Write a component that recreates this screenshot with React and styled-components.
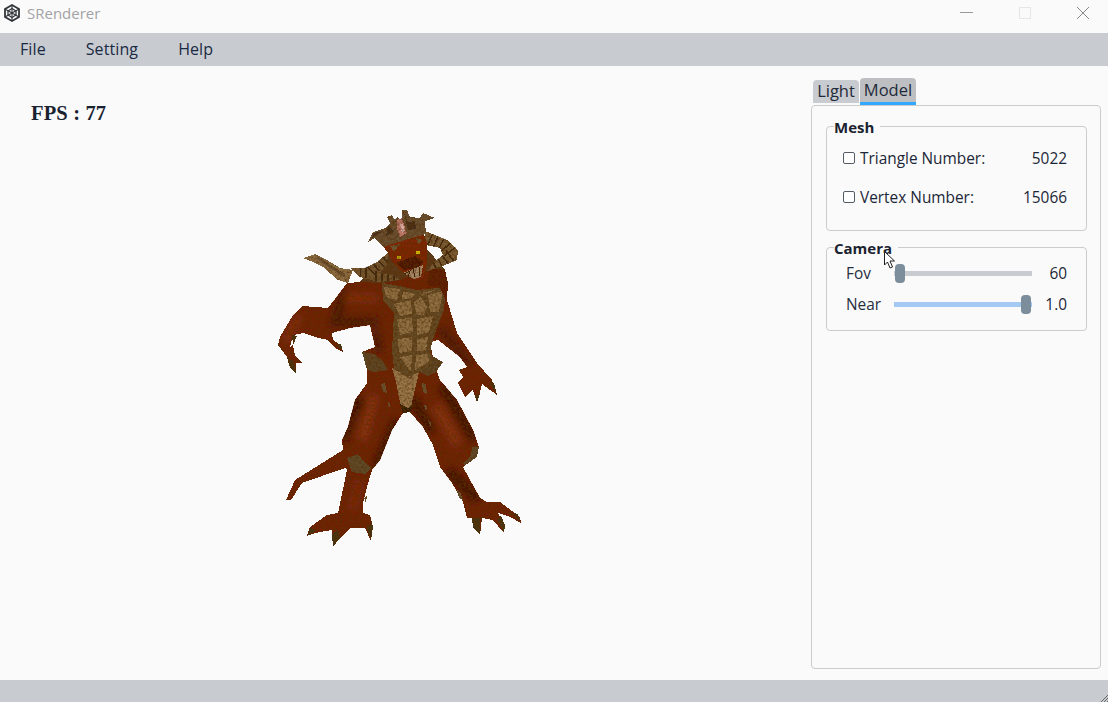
import React from "react";
import styled, { createGlobalStyle } from "styled-components";

const Global = createGlobalStyle`
  html, body { margin: 0; padding: 0; background: #fafafa; }
  body { font-family: "Open Sans", "Noto Sans", "Liberation Sans", sans-serif; color: #1c2738; }
  * { box-sizing: border-box; }
`;

const Page = styled.div`
  width: 1108px; height: 702px; display: flex; flex-direction: column; overflow: hidden; position: relative; background: #fafafa;
`;
const TitleBar = styled.header`
  height: 33px; display: flex; align-items: center; padding: 0 0 7px 3px; flex: none;
`;
const AppName = styled.span`
  margin-left: 6px; font-size: 15px; color: #a3a3a6; flex: 1;
`;
const WinButtons = styled.div`
  display: flex; align-items: center; height: 100%; padding-right: 18px; gap: 44px;
`;
const MenuBar = styled.nav`
  height: 33px; flex: none; background: #c8ccd0; display: flex; align-items: center; padding: 0 0 1px 20px; gap: 40px;
`;
const MenuItem = styled.span`
  font-size: 16px; color: #1a2a44; letter-spacing: 0.1px;
`;
const Main = styled.main`
  flex: 1; min-height: 0; display: flex; padding: 12px 7px 11px 0;
`;
const Viewport = styled.section`
  flex: 1; min-width: 0; padding: 23px 0 0 31px;
`;
const Fps = styled.div`
  font-family: "Liberation Serif", serif; font-weight: 700; font-size: 20.5px; line-height: 24px; color: #1a2230; letter-spacing: 0.15px;
`;
const ModelSvg = styled.svg`
  display: block; margin: 75px 0 0 239px;
`;
const Side = styled.aside`
  width: 290px; flex: none; display: flex; flex-direction: column;
`;
const Tabs = styled.div`
  display: flex; align-items: flex-end; gap: 1px; padding-left: 2px; height: 27px; flex: none;
`;
const Tab = styled.div`
  height: ${p => (p.$active ? "27px" : "23px")};
  width: ${p => (p.$active ? "56px" : "46px")};
  padding-top: ${p => (p.$active ? "1px" : "0")};
  margin-bottom: ${p => (p.$active ? "0" : "2px")};
  text-align: center; font-size: 16.5px; line-height: 21px; color: #1f2a3a;
  background: ${p => (p.$active ? "#bdbfc2" : "#c8ccd0")};
  border-radius: 4px 4px 0 0;
  border-bottom: ${p => (p.$active ? "3px solid #33a8ff" : "none")};
`;
const Panel = styled.div`
  flex: 1; border: 1px solid #ccc; border-radius: 4px; padding: 10px 13px 0 14px; display: flex; flex-direction: column; gap: 6px;
`;
const Group = styled.fieldset`
  margin: 0; padding: 0 19px 0 16px; border: 1px solid #ccc; border-radius: 4px; height: ${p => p.$h}px; min-width: 0; flex: none;
  legend { padding: 0 6px 0 0; margin-left: -9px; font-size: 15px; font-weight: 700; color: #1a2230; line-height: 20px; position: relative; top: 1px; }
`;
const InfoRow = styled.div`
  display: flex; align-items: center; height: 20px; margin-top: ${p => p.$mt}px; font-size: 15.4px;
`;
const Check = styled.span`
  width: 12px; height: 12px; border: 1px solid #555c66; border-radius: 2px; margin-right: 5px; flex: none; background: #fff;
`;
const Value = styled.span`
  margin-left: auto;
`;
const SliderRow = styled.div`
  display: flex; align-items: center; height: 20px; margin: ${p => p.$mt}px 0 0 3px; font-size: 15.4px;
`;
const SliderLabel = styled.span`
  width: 48px; flex: none; color: #26303f;
`;
const Track = styled.div`
  width: 138px; height: 5px; flex: none; background: ${p => p.$fill}; position: relative;
`;
const Thumb = styled.span`
  position: absolute; top: -7px; width: 10px; height: 19px; border-radius: 4px; background: #7c8d9c; left: ${p => p.$left}px;
`;
const SliderValue = styled.span`
  margin-left: auto;
`;
const StatusBar = styled.footer`
  height: 22px; flex: none; background: #c8ccd0; position: relative;
`;
const Grip = styled.svg`
  position: absolute; right: 0; bottom: 0;
`;
const Cursor = styled.svg`
  position: absolute; left: 883px; top: 250px;
`;

const Logo = () => (
  <svg width="18" height="18" viewBox="0 0 18 18" fill="none" stroke="#33363b" strokeWidth="1.6">
    <path d="M9 1 L16 5 V13 L9 17 L2 13 V5 Z" strokeWidth="1.8" />
    <path d="M9 1 V17 M2 5 L16 13 M16 5 L2 13" strokeWidth="1.1" />
    <path d="M9 4.5 L13 7 V11 L9 13.5 L5 11 V7 Z" strokeWidth="1.3" />
  </svg>
);

const Minimize = () => <svg width="14" height="14"><path d="M0 6.5H13" stroke="#999" /></svg>;
const Maximize = () => <svg width="14" height="14"><rect x="1.5" y="1.5" width="11" height="11" fill="none" stroke="#e6e6e6" /></svg>;
const Close = () => <svg width="14" height="14"><path d="M1 1L13 13M13 1L1 13" stroke="#888" /></svg>;

const BODY = `M382 283 L360 282 L347 283 L338 295 L328 308 L303 306 L293 315 L280 337 L278 345 L287 357 L290 368 L296 373 L296 363 L302 363 L295 355 L293 345 L290 347 L293 335 L303 333 L315 337 L328 340 L335 348 L343 352 L338 343 L333 340 L332 333 L350 328 L370 325 L375 347 L362 352 L367 370 L367 383 L355 400 L348 427 L342 440 L343 450 L295 480 L286 500 L291 500 L302 483 L345 468 L347 470 L338 513 L327 515 L310 527 L307 536 L315 533 L332 530 L333 547 L340 538 L350 528 L365 528 L371 541 L373 527 L370 515 L363 513 L363 503 L367 487 L372 470 L380 460 L392 430 L403 413 L410 412 L423 427 L433 445 L440 467 L452 483 L463 502 L467 518 L472 518 L473 527 L480 535 L482 518 L493 520 L504 533 L505 525 L498 513 L510 517 L521 523 L520 517 L500 502 L487 502 L480 498 L463 467 L477 457 L479 447 L473 430 L457 400 L440 380 L434 362 L430 342 L438 340 L460 357 L467 367 L459 370 L463 377 L458 383 L463 393 L465 397 L473 390 L477 403 L480 392 L482 384 L497 395 L492 380 L477 363 L457 333 L447 300 L448 283 L445 270 L420 272 L400 280 Z`;
const RHORN = "M425 231 L447 240 L458 250 L457 260 L445 265 L428 271 L433 263 L443 255 L440 248 L425 245 Z";
const LHORN = "M388 253 L377 262 L365 268 L350 268 L360 277 L378 282 L400 280 L393 275 L380 273 L387 265 Z";
const CROWN = "M368 242 L373 232 L385 228 L390 223 L387 217 L392 215 L395 220 L397 217 L402 220 L402 210 L407 210 L410 217 L420 218 L423 213 L435 218 L425 221 L426 234 L412 238 L383 247 L375 238 Z";

const Monster = () => (
  <ModelSvg width="260" height="355" viewBox="270 200 260 355" shapeRendering="crispEdges">
    <defs>
      <filter id="tex" x="0" y="0" width="100%" height="100%">
        <feTurbulence type="fractalNoise" baseFrequency="0.42" numOctaves="2" seed="7" />
        <feColorMatrix values="0 0 0 0 0.1  0 0 0 0 0.03  0 0 0 0 0  1.8 0 0 0 -0.65" />
        <feComposite in2="SourceAlpha" operator="in" result="n" />
        <feMerge><feMergeNode in="SourceGraphic" /><feMergeNode in="n" /></feMerge>
      </filter>
      <filter id="soft" x="-30%" y="-30%" width="160%" height="160%"><feGaussianBlur stdDeviation="3.5" /></filter>
      <clipPath id="bodyClip"><path d={BODY} /></clipPath>
      <clipPath id="rHornClip"><path d={RHORN} /></clipPath>
      <clipPath id="lHornClip"><path d={LHORN} /></clipPath>
    </defs>
    <g filter="url(#tex)">
      {/* back tail */}
      <path d="M303 258 L315 254 L327 260 L340 268 L353 270 L348 283 L338 280 L323 267 L313 262 Z" fill="#8d6d43" />
      <path d="M318 258 L345 276" fill="none" stroke="#6d5230" strokeWidth="3" />
      {/* neck mass behind the head */}
      <path d="M360 282 L372 268 L388 253 L428 250 L445 270 L448 285 L420 292 L385 288 Z" fill="#5c3a1c" />
      {/* whole body */}
      <path d={BODY} fill="#71220f" />
      <g clipPath="url(#bodyClip)" shapeRendering="auto">
        <g filter="url(#soft)">
          <path d="M344 440 L358 395 M397 420 L376 468 M432 432 L412 398 M474 440 L442 385 M448 470 L478 500" fill="none" stroke="#3c0f05" strokeWidth="9" />
          <path d="M374 395 L362 440 M436 405 L458 445" fill="none" stroke="#8a3214" strokeWidth="11" />
          <path d="M345 290 L335 322 L378 322" fill="none" stroke="#4a1407" strokeWidth="9" />
          <path d="M300 315 L285 342 M345 298 L378 298" fill="none" stroke="#8a3316" strokeWidth="7" />
          <path d="M376 330 L379 352 M440 328 L470 365" fill="none" stroke="#46130a" strokeWidth="7" />
          <path d="M352 510 L360 480" fill="none" stroke="#7f2c12" strokeWidth="8" />
          <path d="M366 400 L350 425" fill="none" stroke="#4f160a" strokeWidth="5" />
        </g>
      </g>
      {/* knees, bumps, claws */}
      <path d="M347 458 L358 454 L364 462 L372 468 L365 474 L352 472 Z M479 447 L477 457 L465 465 L463 464 L471 455 L472 447 Z" fill="#5e4b2a" />
      <path d="M381 384 L385 383 L387 393 L383 392 Z M388 402 L390 403 L390 407 L388 406 Z M422 383 L426 384 L427 394 L423 392 Z M424 405 L427 406 L426 412 Z M428 420 L431 423 L431 427 Z M364 498 L367 495 L366 503 Z M457 490 L461 494 L463 500 L459 498 Z" fill="#6b5430" />
      <path d="M307 536 L311 527 L316 531 Z M333 547 L332 534 L338 530 L340 538 Z M371 541 L367 528 L372 522 L373 527 Z M480 535 L473 527 L472 518 L480 518 Z M504 533 L497 519 L501 516 L505 525 Z M521 523 L513 513 L518 514 Z M290 368 L288 358 L294 362 L296 373 Z M293 345 L292 335 L297 336 Z M343 352 L337 345 L341 344 Z M477 403 L475 396 L480 394 Z M497 395 L490 382 L494 383 Z" fill="#463519" />
      {/* hip plates */}
      <path d="M362 352 L374 354 L383 361 L388 370 L374 372 L367 370 Z M420 372 L432 356 L443 362 L436 372 L428 376 Z" fill="#5d4726" />
      {/* loin cloth */}
      <path d="M392 368 L420 368 L416 385 L413 398 L410 412 L403 413 L399 398 L396 382 Z" fill="#9a7748" />
      <path d="M400 372 L410 378 L416 370" fill="none" stroke="#6d5029" strokeWidth="2" />
      <path d="M403 413 L410 412 L414 404 L408 408 L400 404 Z" fill="#33240f" />
      {/* chest plate */}
      <path d="M382 283 L395 285 L417 290 L436 288 L446 286 L444 310 L436 330 L431 347 L432 363 L420 372 L407 377 L394 369 L392 350 L394 313 L383 300 Z" fill="#654b27" />
      <g fill="#8f6f43">
        <path d="M414 302 L421 297 L427 307 L423 316 L416 314 Z" />
        <path d="M394 304 L411 300 L412 314 L400 316 Z" />
        <path d="M428 295 L443 291 L439 312 L430 312 Z" />
        <path d="M397 319 L412 318 L413 332 L400 335 Z" />
        <path d="M417 319 L433 316 L429 332 L417 335 Z" />
        <path d="M398 339 L412 337 L412 351 L399 353 Z" />
        <path d="M417 339 L428 337 L426 351 L417 351 Z" />
        <path d="M400 357 L412 355 L411 372 Z" />
        <path d="M416 355 L428 354 L429 362 L415 370 Z" />
        <path d="M384 287 L400 289 L397 300 L386 297 Z" />
        <path d="M403 291 L415 294 L411 298 L402 299 Z" />
        <path d="M420 293 L436 290 L426 294 L422 296 Z" />
      </g>
      {/* red neck */}
      <path d="M430 268 L445 270 L448 283 L446 300 L440 288 L427 285 Z" fill="#5f1c0c" />
      {/* right horn */}
      <path d={RHORN} fill="#7a5d36" />
      <g clipPath="url(#rHornClip)">
        <path d="M430 238 L445 245 L452 254 L444 260 L432 266" fill="none" stroke="#3e2c13" strokeWidth="14" strokeDasharray="1.5 4.5" />
      </g>
      {/* left lower horn */}
      <path d={LHORN} fill="#755932" />
      <g clipPath="url(#lHornClip)">
        <path d="M385 258 L370 272 L360 272 M375 277 L395 277" fill="none" stroke="#3e2c13" strokeWidth="12" strokeDasharray="1.5 4.5" />
      </g>
      {/* head */}
      <path d="M382 245 L423 232 L427 243 L427 263 L423 278 L415 280 L403 273 L393 263 L388 253 Z" fill="#7f2810" />
      <path d="M396 263 L415 256 L424 262 L417 268 L404 270 Z" fill="#4e1508" />
      <path d="M403 273 L423 265 L421 277 L414 279 Z" fill="#a88a68" />
      <path d="M404 274 L410 271 L408 278 M413 269 L415 277 M419 267 L419 276" fill="none" stroke="#3a210d" strokeWidth="1" />
      <rect x="397" y="256" width="4" height="3" fill="#c9a90c" />
      <rect x="416" y="251" width="4" height="3" fill="#d8c408" />
      <path d="M390 246 L400 244 L394 252 Z M416 238 L422 240 L418 244 Z" fill="#6e5431" />
      {/* crown */}
      <path d={CROWN} fill="#6b5132" />
      <path d="M374 233 L383 231 L372 238 Z M404 213 L408 222 L415 221 L416 229 L408 230 Z M388 225 L394 232 L386 236 Z" fill="#46331a" />
      <path d="M397 220 L402 218 L407 233 L400 237 L397 228 Z" fill="#bd7766" />
      <path d="M400 224 L403 224 L405 231 L402 233 Z" fill="#dcaea0" />
    </g>
  </ModelSvg>
);

export default function App() {
  return (
    <Page>
      <Global />
      <TitleBar>
        <Logo />
        <AppName>SRenderer</AppName>
        <WinButtons><Minimize /><Maximize /><Close /></WinButtons>
      </TitleBar>
      <MenuBar>
        <MenuItem>File</MenuItem>
        <MenuItem>Setting</MenuItem>
        <MenuItem>Help</MenuItem>
      </MenuBar>
      <Main>
        <Viewport>
          <Fps>FPS : 77</Fps>
          <Monster />
        </Viewport>
        <Side>
          <Tabs>
            <Tab>Light</Tab>
            <Tab $active>Model</Tab>
          </Tabs>
          <Panel>
            <Group $h={115}>
              <legend>Mesh</legend>
              <InfoRow $mt={12}><Check />Triangle Number:<Value>5022</Value></InfoRow>
              <InfoRow $mt={19}><Check />Vertex Number:<Value>15066</Value></InfoRow>
            </Group>
            <Group $h={94}>
              <legend>Camera</legend>
              <SliderRow $mt={6}>
                <SliderLabel>Fov</SliderLabel>
                <Track $fill="#c8ccd0"><Thumb $left={1} /></Track>
                <SliderValue>60</SliderValue>
              </SliderRow>
              <SliderRow $mt={11}>
                <SliderLabel>Near</SliderLabel>
                <Track $fill="#a4c9f2"><Thumb $left={127} /></Track>
                <SliderValue>1.0</SliderValue>
              </SliderRow>
            </Group>
          </Panel>
        </Side>
      </Main>
      <StatusBar>
        <Grip width="8" height="8"><path d="M8 1L1 8M8 4L4 8M8 7L7 8" stroke="#666" /></Grip>
      </StatusBar>
      <Cursor width="14" height="20" viewBox="0 0 14 20">
        <path d="M1.5 1.5 V15 L4.5 12 L7 18 L9.5 17 L7 11 H11.5 Z" fill="#fff" stroke="#222" strokeWidth="1" />
      </Cursor>
    </Page>
  );
}
